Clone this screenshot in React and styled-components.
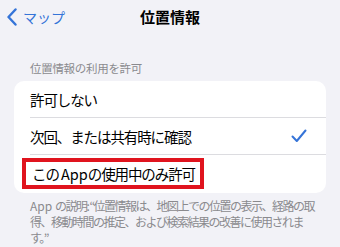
import React from "react";
import styled, { createGlobalStyle } from "styled-components";

const GlobalStyle = createGlobalStyle`
  html, body {
    margin: 0;
    padding: 0;
    background: #f2f2f7;
  }
  body {
    font-family: "Noto Sans CJK JP", "Noto Sans", sans-serif;
    -webkit-font-smoothing: antialiased;
  }
`;

const BLUE = "#3574d8";

const App = () => {
  return (
    <Page>
      <GlobalStyle />
      <NavBar>
        <BackButton>
          <svg width="12" height="18" viewBox="0 0 12 18">
            <path
              d="M9.5 1.5 L2.5 9 L9.5 16.5"
              fill="none"
              stroke={BLUE}
              strokeWidth="2.4"
              strokeLinecap="round"
              strokeLinejoin="round"
            />
          </svg>
          <BackLabel>マップ</BackLabel>
        </BackButton>
        <Title>位置情報</Title>
      </NavBar>

      <SectionHeader>位置情報の利用を許可</SectionHeader>
      <Card>
        <Row>
          <RowLabel>許可しない</RowLabel>
        </Row>
        <Row>
          <RowLabel>次回、または共有時に確認</RowLabel>
          <svg width="16" height="14" viewBox="0 0 16 14">
            <path
              d="M1.5 7.5 L5.8 12 L14.5 1.5"
              fill="none"
              stroke={BLUE}
              strokeWidth="2"
              strokeLinecap="round"
              strokeLinejoin="round"
            />
          </svg>
        </Row>
        <Row last>
          <Highlight>
            <RowLabel>
              この <Latin>App</Latin>の使用中のみ許可
            </RowLabel>
          </Highlight>
        </Row>
      </Card>
      <Footer>
        <Latin>App </Latin>の説明: “位置情報は、地図上での位置の表示、経路の取
        <br />
        得、移動時間の推定、および検索結果の改善に使用されま
        <br />
        す。”
      </Footer>
    </Page>
  );
};

const Page = styled.div`
  width: 340px;
  height: 247px;
  overflow: hidden;
  background: #f2f2f7;
`;

const NavBar = styled.div`
  position: relative;
  height: 32px;
  display: flex;
  align-items: center;
  justify-content: center;
`;

const BackButton = styled.div`
  position: absolute;
  left: 6px;
  top: 7px;
  display: flex;
  align-items: center;
  gap: 5px;
`;

const BackLabel = styled.span`
  color: ${BLUE};
  font-size: 14px;
`;

const Title = styled.h1`
  margin: 0;
  font-size: 15px;
  font-weight: 600;
  color: #000;
`;

const SectionHeader = styled.div`
  margin-top: 28px;
  padding-left: 30px;
  font-size: 11.5px;
  line-height: 16px;
  color: #8a8a8e;
  letter-spacing: -0.3px;
`;

const Card = styled.div`
  margin: 5px 14px 0;
  background: #fff;
  border-radius: 10px;
  padding-left: 16px;
`;

const Row = styled.div`
  height: ${(p) => (p.last ? 38 : 37)}px;
  display: flex;
  align-items: center;
  justify-content: space-between;
  padding-right: 19px;
  border-bottom: ${(p) => (p.last ? "none" : "1px solid #dcdce0")};
  box-sizing: border-box;
`;

const RowLabel = styled.span`
  font-size: 14.5px;
  letter-spacing: -1.1px;
  color: #000;
`;

const Latin = styled.span`
  letter-spacing: 0;
`;

const Highlight = styled.div`
  margin-left: -8px;
  margin-top: -1px;
  height: 31px;
  box-sizing: border-box;
  display: flex;
  align-items: center;
  padding: 0 5px 0 6px;
  border: 4px solid #e0141e;
`;

const Footer = styled.p`
  margin: 5px 0 0;
  padding: 0 10px 0 30px;
  font-size: 12px;
  line-height: 16px;
  letter-spacing: -1.5px;
  color: #8a8a8e;
  white-space: nowrap;
`;

export default App;
